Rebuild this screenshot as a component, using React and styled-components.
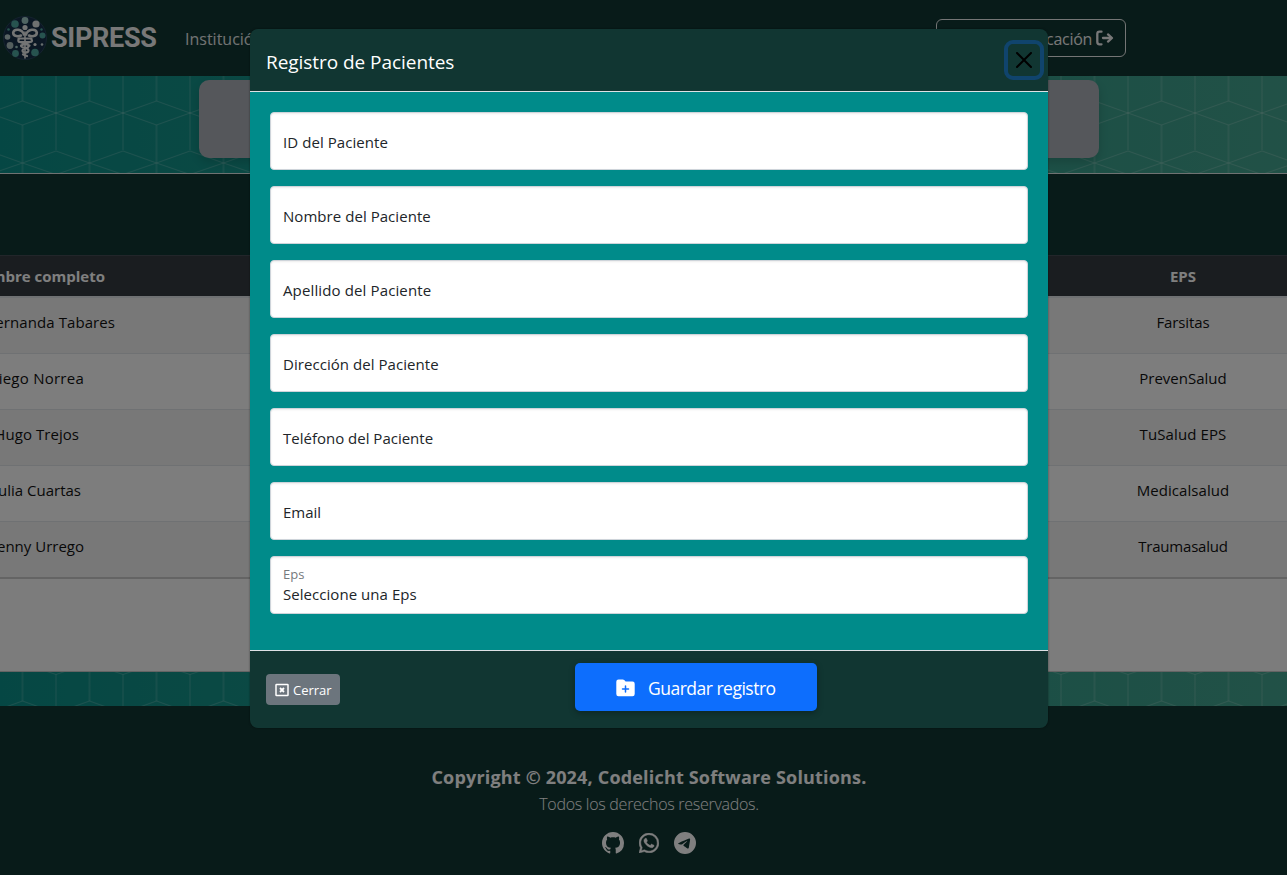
import React from "react";
import styled, { createGlobalStyle } from "styled-components";
import { BsGithub, BsWhatsapp, BsTelegram } from "react-icons/bs";

const Global = createGlobalStyle`
  *, *::before, *::after { box-sizing: border-box; }
  html, body { margin: 0; height: 100%; overflow: hidden; }
  body { font-family: "Open Sans", "Noto Sans", sans-serif; font-size: 15px; line-height: 24px; color: #212529; }
`;

const Text = styled.span`
  display: block;
  white-space: nowrap;
  font-size: ${(p) => p.$size || 15}px;
  letter-spacing: ${(p) => p.$track || 0}px;
  font-weight: ${(p) => p.$weight || 400};
`;

const Page = styled.div`
  position: relative;
  width: 1298px;
  height: 875px;
  overflow: hidden;
  display: flex;
  flex-direction: column;
  background: linear-gradient(90deg, #0b8f88, #44a38e);
`;

const Pattern = styled.svg`
  position: absolute;
  inset: 0;
  width: 100%;
  height: 100%;
`;

const Navbar = styled.header`
  position: relative;
  height: 76px;
  flex: none;
  display: flex;
  align-items: center;
  background: #113632;
  color: #f0f0f0;
`;

const Logo = styled.svg`
  width: 44px;
  height: 46px;
  margin-left: 3px;
`;

const Brand = styled.span`
  width: 138px;
  padding-left: 4px;
  font: 700 27px/38px Roboto, Arial, sans-serif;
  letter-spacing: -0.3px;
  white-space: nowrap;
`;

const NavLink = styled.div`
  flex: 1;
  padding-top: 2px;
  color: #e3e7e6;
`;

const OutlineButton = styled.div`
  width: 190px;
  height: 38px;
  margin-right: 172px;
  padding: 2px 11px 0 0;
  border: 1px solid #e8ebea;
  border-radius: 6px;
  display: flex;
  justify-content: flex-end;
  align-items: center;
  gap: 3px;

  svg { margin-top: -2px; }
`;

const Hero = styled.div`
  position: relative;
  height: 98px;
  flex: none;
  padding: 4px 199px 0;
  border-bottom: 1px solid #dfe5e4;
`;

const HeroCard = styled.div`
  height: 78px;
  border-radius: 10px;
  background: #abaeb6;
  box-shadow: 0 4px 10px rgba(0, 0, 0, 0.15);
`;

const Toolbar = styled.div`
  position: relative;
  height: 81px;
  flex: none;
  background: #113632;
`;

const TablePanel = styled.div`
  position: relative;
  height: 417px;
  flex: none;
  background: #f8f8f8;
  border-bottom: 1px solid #c8c8c8;
`;

const Row = styled.div`
  display: flex;
  height: ${(p) => (p.$head ? 43 : p.$last ? 57 : 56)}px;
  padding-top: ${(p) => (p.$head ? 8 : 12)}px;
  background: ${(p) => (p.$head ? "#343a40" : p.$odd ? "#f0f0f0" : "#fbfbfb")};
  color: ${(p) => (p.$head ? "#fff" : "#111")};
  border-top: ${(p) => (p.$head ? "1px solid #454d55" : "none")};
  border-bottom: ${(p) => (p.$head || p.$last ? "2px" : "1px")} solid
    ${(p) => (p.$last ? "#c9c9c9" : "#dee2e6")};
`;

const NameCell = styled.div`
  width: ${(p) => p.$end}px;
  margin-right: ${(p) => 1068 - p.$end}px;
  display: flex;
  justify-content: flex-end;
`;

const EpsCell = styled.div`
  width: 230px;
  display: flex;
  justify-content: center;
`;

const Footer = styled.footer`
  position: relative;
  height: 170px;
  margin-top: 34px;
  padding-top: 59px;
  flex: none;
  display: flex;
  flex-direction: column;
  align-items: center;
  gap: 3px;
  background: #113632;
  color: #fff;
`;

const Socials = styled.div`
  display: flex;
  gap: 15px;
  margin-top: 13px;
  align-items: center;
`;

const Backdrop = styled.div`
  position: absolute;
  inset: 0;
  padding-top: 29px;
  background: rgba(0, 0, 0, 0.5);
  display: flex;
  justify-content: center;
  align-items: flex-start;
`;

const Modal = styled.div`
  width: 798px;
  height: 699px;
  border-radius: 8px;
  overflow: hidden;
  background: #113632;
  box-shadow: 0 0 2px rgba(0, 0, 0, 0.5);
`;

const ModalHeader = styled.div`
  height: 63px;
  padding: 4px 4px 0 16px;
  display: flex;
  align-items: center;
  justify-content: space-between;
  border-bottom: 1px solid #dee2e6;
  color: #fff;
`;

const CloseButton = styled.button`
  width: 40px;
  height: 40px;
  margin-top: -4px;
  padding: 0;
  display: grid;
  place-items: center;
  background: none;
  border: 4px solid #10446d;
  border-radius: 9px;
`;

const ModalBody = styled.div`
  height: 558px;
  padding: 20px;
  display: flex;
  flex-direction: column;
  gap: 16px;
  background: #008b8a;
`;

const Field = styled.div`
  height: 58px;
  padding: ${(p) => (p.$filled ? "7px 12px" : "17px 12px")};
  border: 1px solid #ced4da;
  border-radius: 4px;
  background: #fff;
  box-shadow: inset 0 1px 2px rgba(0, 0, 0, 0.075);
`;

const FloatLabel = styled.div`
  height: 18px;
  color: #75797d;

  span { line-height: 21px; }
`;

const ModalFooter = styled.div`
  height: 78px;
  padding: 12px 16px 0;
  border-top: 1px solid #dee2e6;
  display: flex;
  align-items: flex-start;
  color: #fff;
`;

const SmallButton = styled.div`
  width: 74px;
  height: 31px;
  margin: 11px 235px 0 0;
  padding-left: 9px;
  border-radius: 4px;
  display: flex;
  align-items: center;
  gap: 4px;
  background: #6c757d;
`;

const PrimaryButton = styled.div`
  width: 242px;
  height: 48px;
  padding: 2px 0 0 41px;
  border-radius: 5px;
  display: flex;
  align-items: center;
  gap: 13px;
  background: #0d6efd;
  box-shadow: 0 2px 6px rgba(0, 0, 0, 0.3);
`;

const rows = [
  ["Fernanda Tabares", 115, "Farsitas", 0.08, -0.1],
  ["Diego Norrea", 84, "PrevenSalud", 0.25, 0],
  ["Hugo Trejos", 79, "TuSalud EPS", 0.05, 0.1],
  ["Julia Cuartas", 81, "Medicalsalud", 0, 0.05],
  ["Jenny Urrego", 84, "Traumasalud", 0, -0.2],
];

const fields = [
  ["ID del Paciente", 0.07],
  ["Nombre del Paciente", 0.05],
  ["Apellido del Paciente", 0.13],
  ["Dirección del Paciente", 0.05],
  ["Teléfono del Paciente", 0],
  ["Email", 0],
];

const Hexes = () => (
  <Pattern>
    <defs>
      <pattern id="cubes" x="22.5" y="63" width="67" height="100" patternUnits="userSpaceOnUse">
        <g fill="none" stroke="#fff" strokeOpacity="0.2" strokeWidth="1">
          <path strokeWidth="2" d="M0 0V38M67 0V38M0 62V100M67 62V100" strokeOpacity="0.12" />
          <path d="M33.5 11.5V87" />
          <path d="M0 38L67 62M0 62L67 38M0 0L33.5 11.5L67 0M0 100L33.5 88L67 100" />
        </g>
      </pattern>
    </defs>
    <rect width="1298" height="875" fill="url(#cubes)" />
  </Pattern>
);

const dots = [
  [12, 9, 3.8, "#4fa79f"], [22, 5.5, 3.4, "#9fc9c4"], [33, 9, 3.6, "#dfe3e3"],
  [39.5, 20.5, 3, "#4fa79f"], [4.5, 22, 2.8, "#b5c9c8"], [7, 30.5, 3.4, "#a8bdbd"],
  [12.5, 38.5, 3.4, "#4fa79f"], [32, 37.5, 3.8, "#4fa79f"], [39, 29.5, 1.3, "#ccdddd"],
  [5.5, 14.5, 1.3, "#4fa79f"], [38.5, 14.5, 1.2, "#4fa79f"], [32, 29.5, 1.6, "#e8eaea"],
  [13.5, 32, 1.3, "#9fc9c4"],
];

const Caduceus = () => (
  <Logo viewBox="0 0 44 46">
    <circle cx="22" cy="23" r="21.5" fill="#172f48" stroke="#28445c" />
    {dots.map(([x, y, r, c]) => (
      <circle key={`${x}-${y}`} cx={x} cy={y} r={r} fill={c} />
    ))}
    <g fill="none" stroke="#e6e8e8" strokeLinecap="round" strokeLinejoin="round">
      <path strokeWidth="1.6" d="M22 17V43" />
      <path strokeWidth="2.6" d="M21 19.5C19 13.5 11 13.5 10.2 17.5C10 22 16 21.5 18 20.5M23 19.5C25 13.5 33 13.5 33.8 17.5C34 22 28 21.5 26 20.5" />
      <path strokeWidth="2.2" d="M15.5 23.5H28.5M17 27H27.5C30 27 29 23.5 27 23.5M17 23.5C14.5 24 15 27 17 27L26.5 30.5M27 27L18 30.5C17.5 33.5 26 32 25.5 35.5C25 38.5 19.5 38 19.5 35.5C19.5 33 26 34 26 30.5M20 39.5L24 41" />
    </g>
    <circle cx="22" cy="12.5" r="2.6" fill="#e6e8e8" />
  </Logo>
);

export default function App() {
  return (
    <>
      <Global />
      <Page>
        <Hexes />
        <Navbar>
          <Caduceus />
          <Brand>SIPRESS</Brand>
          <NavLink><Text $size={16}>Institución</Text></NavLink>
          <OutlineButton>
            <Text $size={16} $track={-0.3}>Cerrar aplicación</Text>
            <svg width="19" height="16" viewBox="0 0 19 16" fill="none" stroke="currentColor" strokeWidth="2.3" strokeLinecap="round" strokeLinejoin="round">
              <path d="M6.5 1.7H4.5Q2.3 1.7 2.3 4V12Q2.3 14.3 4.5 14.3H6.5" />
              <path d="M8 8H16" />
              <path d="M13 4.4L17 8L13 11.6" />
            </svg>
          </OutlineButton>
        </Navbar>
        <Hero><HeroCard /></Hero>
        <Toolbar />
        <TablePanel>
          <Row $head>
            <NameCell $end={105}><Text $weight={700}>Nombre completo</Text></NameCell>
            <EpsCell><Text $weight={700}>EPS</Text></EpsCell>
          </Row>
          {rows.map(([name, end, eps, nameTrack, epsTrack], i) => (
            <Row key={name} $odd={i % 2 === 0} $last={i === 4}>
              <NameCell $end={end}><Text $track={nameTrack}>{name}</Text></NameCell>
              <EpsCell><Text $track={epsTrack}>{eps}</Text></EpsCell>
            </Row>
          ))}
        </TablePanel>
        <Footer>
          <Text $weight={700} $size={18} $track={0.18}>Copyright © 2024, Codelicht Software Solutions.</Text>
          <Text $weight={300} $size={16} $track={-0.27}>Todos los derechos reservados.</Text>
          <Socials>
            <BsGithub size={22} />
            <BsWhatsapp size={20} strokeWidth={0.4} />
            <BsTelegram size={22} />
          </Socials>
        </Footer>
        <Backdrop>
          <Modal>
            <ModalHeader>
              <Text $size={19} $track={-0.05}>Registro de Pacientes</Text>
              <CloseButton aria-label="Cerrar">
                <svg width="16" height="16" viewBox="0 0 16 16">
                  <path d="M.293.293a1 1 0 0 1 1.414 0L8 6.586 14.293.293a1 1 0 1 1 1.414 1.414L9.414 8l6.293 6.293a1 1 0 0 1-1.414 1.414L8 9.414l-6.293 6.293a1 1 0 0 1-1.414-1.414L6.586 8 .293 1.707a1 1 0 0 1 0-1.414z" />
                </svg>
              </CloseButton>
            </ModalHeader>
            <ModalBody>
              {fields.map(([label, track]) => (
                <Field key={label}><Text $track={track}>{label}</Text></Field>
              ))}
              <Field $filled>
                <FloatLabel><Text $size={13}>Eps</Text></FloatLabel>
                <Text $track={0.05}>Seleccione una Eps</Text>
              </Field>
            </ModalBody>
            <ModalFooter>
              <SmallButton>
                <svg width="14" height="14" viewBox="0 0 14 14" fill="none" stroke="#fff">
                  <rect x="1" y="1.5" width="12" height="11" strokeWidth="1.5" rx="0.5" />
                  <path d="M5 5L9 9M9 5L5 9" strokeWidth="1.8" />
                </svg>
                <Text $size={13}>Cerrar</Text>
              </SmallButton>
              <PrimaryButton>
                <svg width="19" height="18" viewBox="0 0 19 18">
                  <path fill="#fff" d="M2.5 0.5H6.8Q7.6 0.5 8.2 1.1L9.6 2.5H16.5Q18.7 2.5 18.7 4.7V15Q18.7 17.3 16.5 17.3H2.5Q0.3 17.3 0.3 15V2.7Q0.3 0.5 2.5 0.5Z" />
                  <path stroke="#0d6efd" strokeWidth="1.5" strokeLinecap="round" d="M9.5 7V13M6.5 10H12.5" />
                </svg>
                <Text $size={17.5} $track={-0.5}>Guardar registro</Text>
              </PrimaryButton>
            </ModalFooter>
          </Modal>
        </Backdrop>
      </Page>
    </>
  );
}
